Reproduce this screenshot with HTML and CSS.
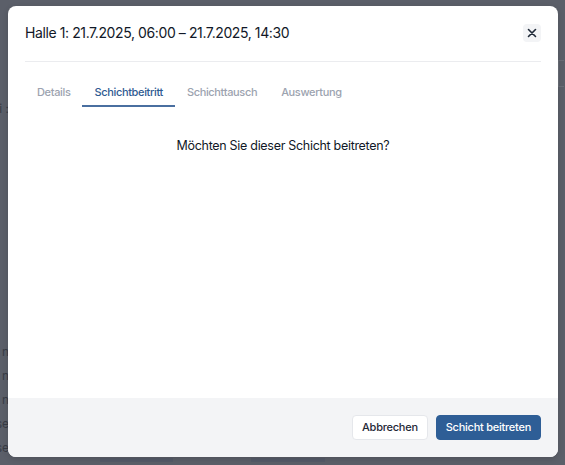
FILE: index.html
```html
<!DOCTYPE html>
<html lang="de">
<head>
<meta charset="utf-8">
<title>Schicht</title>
<link rel="stylesheet" href="styles.css">
</head>
<body>
<div class="page">
  <div class="page-col">
    <div class="bg-line l1"><span>Zeitraum i :</span></div>
    <div class="bg-line l2"><span>Schicht n</span></div>
    <div class="bg-line"><span>Schicht n</span></div>
    <div class="bg-line"><span>Schicht n</span></div>
    <div class="bg-line"><span>Pause</span></div>
    <div class="bg-line"><span>Pause</span></div>
  </div>
  <div class="bg-edge"></div>
  <div class="bg-bottom">
    <span class="bg-chip c1"></span>
    <span class="bg-chip c2"></span>
  </div>
</div>

<div class="overlay">
  <div class="modal">
    <div class="modal-header">
      <h2 class="modal-title">Halle 1: 21.7.2025, 06:00 – 21.7.2025, 14:30</h2>
      <button class="close-btn" aria-label="Schließen">
        <svg width="10" height="10" viewBox="0 0 10 10"><path d="M1.5 1.5 L8.5 8.5 M8.5 1.5 L1.5 8.5" stroke="#1f2937" stroke-width="1.6" stroke-linecap="round"/></svg>
      </button>
    </div>
    <div class="divider"></div>
    <div class="modal-body">
      <nav class="tabs">
        <span class="tab">Details</span>
        <span class="tab active">Schichtbeitritt</span>
        <span class="tab">Schichttausch</span>
        <span class="tab">Auswertung</span>
      </nav>
      <p class="question">Möchten Sie dieser Schicht beitreten?</p>
    </div>
    <div class="modal-footer">
      <button class="btn btn-secondary">Abbrechen</button>
      <button class="btn btn-primary">Schicht beitreten</button>
    </div>
  </div>
</div>
</body>
</html>
```
FILE: styles.css
```css
* { box-sizing: border-box; }
html, body { margin: 0; padding: 0; }
body {
  width: 565px;
  height: 465px;
  overflow: hidden;
  background: #5b5f69;
  font-family: Inter, "Noto Sans", sans-serif;
  position: relative;
}
.page {
  width: 565px;
  height: 465px;
  position: relative;
}
.page-col {
  width: 9px;
  padding-top: 97px;
  display: flex;
  flex-direction: column;
}
.bg-line {
  display: flex;
  justify-content: flex-end;
  white-space: nowrap;
  color: #383c45;
  font-size: 12px;
  line-height: 24px;
  height: 24px;
}
.bg-line.l2 { margin-top: 219px; }
.bg-edge {
  position: absolute;
  left: 558px;
  top: 60px;
  width: 6px;
  height: 27px;
  border: 1px solid #6a6e77;
  border-right: none;
}
.bg-bottom {
  position: absolute;
  left: 0;
  top: 458px;
  width: 565px;
  height: 7px;
}
.bg-chip {
  position: absolute;
  top: 0;
  height: 4px;
  background: #545a68;
}
.c1 { left: 100px; width: 73px; }
.c2 { left: 251px; width: 74px; }

.overlay {
  position: absolute;
  left: 0;
  top: 0;
  width: 565px;
  height: 465px;
}
.modal {
  position: absolute;
  left: 8px;
  top: 6px;
  width: 550px;
  height: 451px;
  background: #ffffff;
  border-radius: 8px;
  overflow: hidden;
  display: flex;
  flex-direction: column;
  box-shadow: 0 2px 6px rgba(0,0,0,0.15);
}
.modal-header {
  display: flex;
  align-items: center;
  justify-content: space-between;
  padding: 15px 17px 16px 17px;
  height: 55px;
}
.modal-title {
  margin: 0;
  font-size: 14px;
  font-weight: 400;
  letter-spacing: -0.4px;
  color: #111827;
  line-height: 24px;
}
.close-btn {
  width: 18px;
  height: 18px;
  border: none;
  border-radius: 4px;
  background: #f3f4f6;
  display: flex;
  align-items: center;
  justify-content: center;
  padding: 0;
}
.divider {
  height: 1px;
  background: #ebecef;
  margin: 0 17px;
}
.modal-body {
  flex: 1;
  padding: 0 17px;
}
.tabs {
  display: flex;
  margin-top: 20px;
}
.tab {
  padding: 0 12px 3px;
  font-size: 11px;
  font-weight: 500;
  letter-spacing: -0.35px;
  line-height: 20px;
  color: #9ca3af;
  border-bottom: 2px solid transparent;
}
.tab.active {
  color: #2f5b92;
  border-bottom-color: #4a6fa0;
}
.question {
  margin: 28px 0 0;
  text-align: center;
  font-size: 12.5px;
  letter-spacing: -0.3px;
  line-height: 22px;
  color: #111827;
}
.modal-footer {
  height: 59px;
  background: #f3f4f6;
  display: flex;
  justify-content: flex-end;
  align-items: center;
  gap: 8px;
  padding: 0 17px;
}
.btn {
  height: 25px;
  border-radius: 4px;
  font-family: Inter, "Noto Sans", sans-serif;
  font-size: 11px;
  font-weight: 500;
  letter-spacing: -0.25px;
  padding: 0 9px;
  line-height: 23px;
}
.btn-secondary {
  background: #ffffff;
  color: #1f2937;
  border: 1px solid #e5e7eb;
}
.btn-primary {
  background: #2e5e96;
  color: #ffffff;
  border: 1px solid #2e5e96;
}
```
